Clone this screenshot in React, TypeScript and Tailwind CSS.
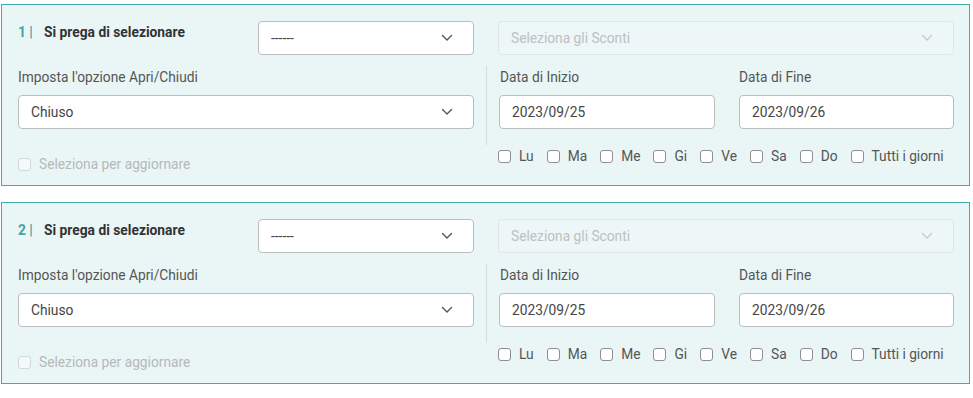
import React from "react";

const Chevron = ({ light = false }: { light?: boolean }) => (
  <svg width="12" height="8" viewBox="0 0 12 8" fill="none" className="shrink-0">
    <path d="M1.5 1.5 L6 6 L10.5 1.5" stroke={light ? "#c4cccc" : "#555"} strokeWidth="1.4" strokeLinecap="round" strokeLinejoin="round" />
  </svg>
);

const Select = ({ value, disabled = false, width }: { value: string; disabled?: boolean; width: string }) => (
  <div
    className={`${width} h-[34px] flex items-center justify-between pl-[12px] pr-[20px] rounded-[4px] border ${
      disabled ? "border-[#dfe6e6] bg-[#edf7f7] text-[#bcc1c1]" : "border-[#bdbdbd] bg-white text-[#444]"
    } text-[13.75px]`}
  >
    <span>{value}</span>
    <Chevron light={disabled} />
  </div>
);

const Box = ({ disabled = false }: { disabled?: boolean }) => (
  <span
    className={`inline-block w-[13px] h-[13px] rounded-[3px] border ${
      disabled ? "border-[#d4d8d8] bg-[#f4f9f9]" : "border-[#8f8f8f] bg-white"
    } shrink-0`}
  />
);

const days = ["Lu", "Ma", "Me", "Gi", "Ve", "Sa", "Do", "Tutti i giorni"];

const Panel = ({ n }: { n: number }) => (
  <div className="ml-[1px] w-[969px] border border-[#41acac] bg-[#eaf6f6] pt-[16px] pl-[16px] pb-[11px]">
    <div className="flex h-[34px]">
      <div className="w-[240px] flex items-start leading-[20px] text-[13.8px] font-bold mt-[1px]">
        <span className="text-[#41a5a5] w-[26px]">{n} |</span>
        <span className="text-[#333]">Si prega di selezionare</span>
      </div>
      <Select value="------" width="w-[216px]" />
      <div className="w-[24px]" />
      <Select value="Seleziona gli Sconti" disabled width="w-[456px]" />
    </div>
    <div className="flex mt-[11px]">
      <div className="w-[456px]">
        <div className="mt-[1px] h-[20px] leading-[20px] text-[13.75px] text-[#555]">Imposta l'opzione Apri/Chiudi</div>
        <div className="mt-[8px]">
          <Select value="Chiuso" width="w-[456px]" />
        </div>
        <div className="mt-[25px] h-[20px] flex items-center gap-[8px] text-[13.75px] text-[#b5b9b9]">
          <Box disabled />
          <span>Seleziona per aggiornare</span>
        </div>
      </div>
      <div className="ml-[12px] w-[468px]">
        <div className="border-l border-[#d3dcdc] pl-[12px] pb-[16px]">
          <div className="flex gap-[24px]">
            <div className="w-[216px]">
              <div className="mt-[1px] h-[20px] leading-[20px] text-[13.75px] text-[#555] pl-[1px]">Data di Inizio</div>
              <div className="mt-[8px] h-[34px] rounded-[4px] border border-[#bdbdbd] bg-white flex items-center pl-[12px] text-[13.75px] text-[#444]">
                2023/09/25
              </div>
            </div>
            <div className="w-[215px]">
              <div className="mt-[1px] h-[20px] leading-[20px] text-[13.75px] text-[#555]">Data di Fine</div>
              <div className="mt-[8px] h-[34px] rounded-[4px] border border-[#bdbdbd] bg-white flex items-center pl-[12px] text-[13.75px] text-[#444]">
                2023/09/26
              </div>
            </div>
          </div>
        </div>
        <div className="mt-[1px] pl-[12px] h-[20px] flex items-center whitespace-nowrap text-[13.75px] text-[#555]">
          {days.map((d) => (
            <div key={d} className="flex shrink-0 items-center mr-[13px]">
              <Box />
              <span className="ml-[8px]">{d}</span>
            </div>
          ))}
        </div>
      </div>
    </div>
  </div>
);

export default function App() {
  return (
    <div className="w-[973px] h-[398px] bg-white pt-[4px]" style={{ fontFamily: "Roboto, 'Liberation Sans', sans-serif" }}>
      <Panel n={1} />
      <div className="h-[16px]" />
      <Panel n={2} />
    </div>
  );
}
